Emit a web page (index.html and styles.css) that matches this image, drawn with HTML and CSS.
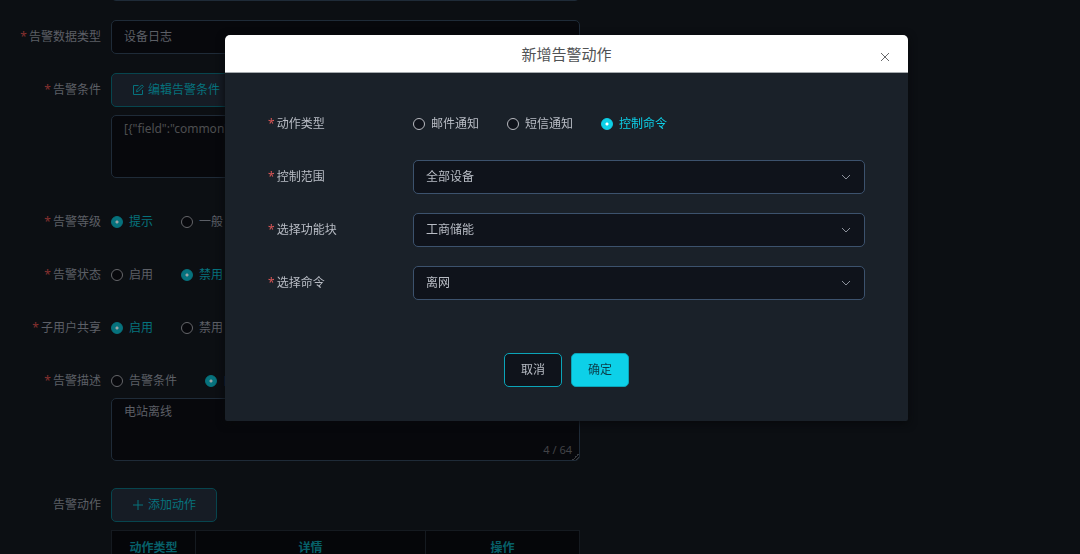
FILE: index.html
```html
<!DOCTYPE html>
<html lang="zh-CN">
<head>
<meta charset="utf-8">
<meta name="viewport" content="width=device-width, initial-scale=1">
<title>新增告警动作</title>
<link rel="stylesheet" href="styles.css">
</head>
<body class="modal-open">
<main class="page">
  <form class="form">
    <div class="item">
      <span class="label"></span>
      <div class="content"><input class="field" type="text" aria-label="名称"></div>
    </div>
    <div class="item">
      <label class="label required" for="data-type">告警数据类型</label>
      <div class="content"><select class="field" id="data-type"><option>设备日志</option></select></div>
    </div>
    <div class="item item-tall">
      <label class="label required" for="condition">告警条件</label>
      <div class="content">
        <button class="ghost" type="button">
          <svg class="icon" viewBox="0 0 12 12" fill="none" stroke="currentColor"><path d="M6.5 1.5H1.5v9h9V6M4.5 7.8l.4-2L9.8.9l1.5 1.5-4.9 4.9z"/></svg>
          <span>编辑告警条件</span>
        </button>
        <textarea class="field area area-code" id="condition">[{"field":"common"}]</textarea>
      </div>
    </div>
    <div class="item">
      <span class="label required">告警等级</span>
      <div class="content radios">
        <label class="radio"><input type="radio" name="level" checked><span>提示</span></label>
        <label class="radio"><input type="radio" name="level"><span>一般</span></label>
      </div>
    </div>
    <div class="item">
      <span class="label required">告警状态</span>
      <div class="content radios">
        <label class="radio"><input type="radio" name="state"><span>启用</span></label>
        <label class="radio"><input type="radio" name="state" checked><span>禁用</span></label>
      </div>
    </div>
    <div class="item">
      <span class="label required">子用户共享</span>
      <div class="content radios">
        <label class="radio"><input type="radio" name="share" checked><span>启用</span></label>
        <label class="radio"><input type="radio" name="share"><span>禁用</span></label>
      </div>
    </div>
    <div class="item item-tall">
      <span class="label required">告警描述</span>
      <div class="content content-joined">
        <div class="radios">
          <label class="radio"><input type="radio" name="desc"><span>告警条件</span></label>
          <label class="radio"><input type="radio" name="desc" checked><span>自定义</span></label>
        </div>
        <div class="counted">
          <textarea class="field area" aria-label="告警描述">电站离线</textarea>
          <span class="count">4 / 64</span>
        </div>
      </div>
    </div>
    <div class="item">
      <span class="label">告警动作</span>
      <div class="content">
        <button class="ghost" type="button">
          <svg class="icon" viewBox="0 0 12 12" fill="none" stroke="currentColor"><path d="M6 1v10M1 6h10"/></svg>
          <span>添加动作</span>
        </button>
        <table class="table">
          <thead><tr><th class="col-type">动作类型</th><th>详情</th><th class="col-ops">操作</th></tr></thead>
        </table>
      </div>
    </div>
  </form>
</main>

<div class="overlay">
  <section class="dialog" role="dialog" aria-modal="true" aria-labelledby="dialog-title">
    <header class="dialog-head">
      <h2 class="dialog-title" id="dialog-title">新增告警动作</h2>
      <button class="close" type="button" aria-label="关闭"><svg viewBox="0 0 10 10" fill="none" stroke="currentColor"><path d="M1 1l8 8M9 1L1 9"/></svg></button>
    </header>
    <form class="dialog-body">
      <div class="row">
        <span class="row-label required">动作类型</span>
        <div class="radios">
          <label class="radio"><input type="radio" name="action"><span>邮件通知</span></label>
          <label class="radio"><input type="radio" name="action"><span>短信通知</span></label>
          <label class="radio"><input type="radio" name="action" checked><span>控制命令</span></label>
        </div>
      </div>
      <div class="row">
        <label class="row-label required" for="scope">控制范围</label>
        <div class="select"><select class="field" id="scope"><option>全部设备</option></select><svg class="chevron" viewBox="0 0 10 6" fill="none" stroke="currentColor"><path d="M1 1l4 4 4-4"/></svg></div>
      </div>
      <div class="row">
        <label class="row-label required" for="block">选择功能块</label>
        <div class="select"><select class="field" id="block"><option>工商储能</option></select><svg class="chevron" viewBox="0 0 10 6" fill="none" stroke="currentColor"><path d="M1 1l4 4 4-4"/></svg></div>
      </div>
      <div class="row">
        <label class="row-label required" for="command">选择命令</label>
        <div class="select"><select class="field" id="command"><option>离网</option></select><svg class="chevron" viewBox="0 0 10 6" fill="none" stroke="currentColor"><path d="M1 1l4 4 4-4"/></svg></div>
      </div>
      <div class="actions">
        <button class="btn" type="button">取消</button>
        <button class="btn btn-primary" type="submit">确定</button>
      </div>
    </form>
  </section>
</div>
</body>
</html>
```

FILE: styles.css
```css
* { box-sizing: border-box; }

:root {
  --text: #5c5f66;
  --accent: #06727d;
  --line: #1f2b38;
  --field: #07080c;
  --danger: #86302f;
  --ring: #65666a;
  --dot: #9ba3a5;
}

body {
  margin: 0;
  background: #0c0f13;
  color: var(--text);
  font: 12px/18px "Noto Sans", "Noto Sans CJK SC", sans-serif;
}

.modal-open { height: 100vh; overflow: hidden; }

button, input, select, textarea { font: inherit; color: inherit; margin: 0; }

/* The page is scrolled so that its first field is just out of view. */
.form {
  margin-top: -33px;
  max-width: 580px;
  display: flex;
  flex-direction: column;
  gap: 19px;
}

.item { display: flex; gap: 10px; }
.item-tall { margin-bottom: 8px; }
.label { flex: 0 0 101px; line-height: 34px; text-align: right; }

.required::before {
  content: "*";
  margin-right: 2px;
  color: var(--danger);
}

.content { flex: 1; min-width: 0; display: flex; flex-direction: column; align-items: flex-start; gap: 8px; }
.content-joined { gap: 0; }
.content.radios { flex-direction: row; align-items: center; gap: 28px; }

.field {
  display: block;
  width: 100%;
  height: 34px;
  padding: 0 12px;
  border: 1px solid var(--line);
  border-radius: 5px;
  background: var(--field);
  appearance: none;
  outline: none;
}

.area { height: 63px; padding: 4px 12px; resize: vertical; }
.area::-webkit-resizer {
  background: linear-gradient(135deg, transparent 50%, #3a3c40 50% 60%, transparent 60% 75%, #3a3c40 75% 85%, transparent 85%) right bottom / 7px 7px no-repeat;
}
.area-code { color: #4d4e50; }

.counted { position: relative; width: 100%; }
.count { position: absolute; right: 8px; bottom: 2px; color: #424347; font-size: 11px; }

.ghost {
  display: flex;
  align-items: center;
  gap: 4px;
  height: 34px;
  padding: 0 20px;
  border: 1px solid #07454e;
  border-radius: 5px;
  background: #161c25;
  color: var(--accent);
}

.icon { width: 12px; height: 12px; }

.radios { display: flex; align-items: center; gap: 28px; height: 34px; }
.radio { display: flex; align-items: center; gap: 6px; white-space: nowrap; }
.radio input {
  appearance: none;
  width: 12px;
  height: 12px;
  border: 1px solid var(--ring);
  border-radius: 50%;
  background: var(--field);
}
.radio input:checked {
  border-color: var(--accent);
  background: radial-gradient(circle, var(--dot) 0 1px, var(--accent) 2px);
}
.radio input:checked + span { color: var(--accent); }

.table { width: 100%; border-collapse: collapse; table-layout: fixed; }
.table th {
  height: 34px;
  padding: 0;
  border: 1px solid #151a20;
  background: #050609;
  color: #076069;
  font-weight: 700;
}
.col-type { width: 84px; }
.col-ops { width: 154px; }

.overlay {
  position: fixed;
  inset: 0;
  display: flex;
  justify-content: center;
  align-items: flex-start;
  padding: 35px 0 0 53px;
}

.dialog {
  --text: #b9bdc5;
  --accent: #0dd0e8;
  --line: #3c526d;
  --field: #0f131b;
  --danger: #d95757;
  --ring: #b8bac0;
  --dot: #ffffff;
  width: 683px;
  max-width: 100%;
  border-radius: 5px 5px 2px 2px;
  background: #1a2129;
  color: var(--text);
  box-shadow: 0 2px 8px #08090b;
}

.dialog-head {
  position: relative;
  padding: 8px 48px 6px;
  border-bottom: 1px solid #a6abae;
  border-radius: 5px 5px 0 0;
  background: #fff;
  text-align: center;
}
.dialog-title { margin: 0; color: #505254; font-size: 15px; line-height: 23px; font-weight: 400; }

.close {
  position: absolute;
  right: 13px;
  top: 12px;
  display: grid;
  place-items: center;
  width: 20px;
  height: 20px;
  padding: 0;
  border: 0;
  background: none;
  color: #68696b;
}
.close svg { width: 10px; height: 10px; }

.dialog-body {
  display: flex;
  flex-direction: column;
  gap: 19px;
  padding: 34px 43px;
}
.row { display: flex; }
.row-label { flex: 0 0 145px; line-height: 34px; }
.select { position: relative; flex: 1; min-width: 0; }
.chevron {
  position: absolute;
  right: 14px;
  top: 14px;
  width: 10px;
  height: 6px;
  color: #8b909a;
  pointer-events: none;
}

.actions { display: flex; justify-content: center; gap: 9px; padding-top: 34px; }
.btn {
  height: 34px;
  padding: 0 16px;
  border: 1px solid #0ba4b8;
  border-radius: 5px;
  background: var(--field);
}
.btn-primary { background: var(--accent); color: #0b3c48; }
```
